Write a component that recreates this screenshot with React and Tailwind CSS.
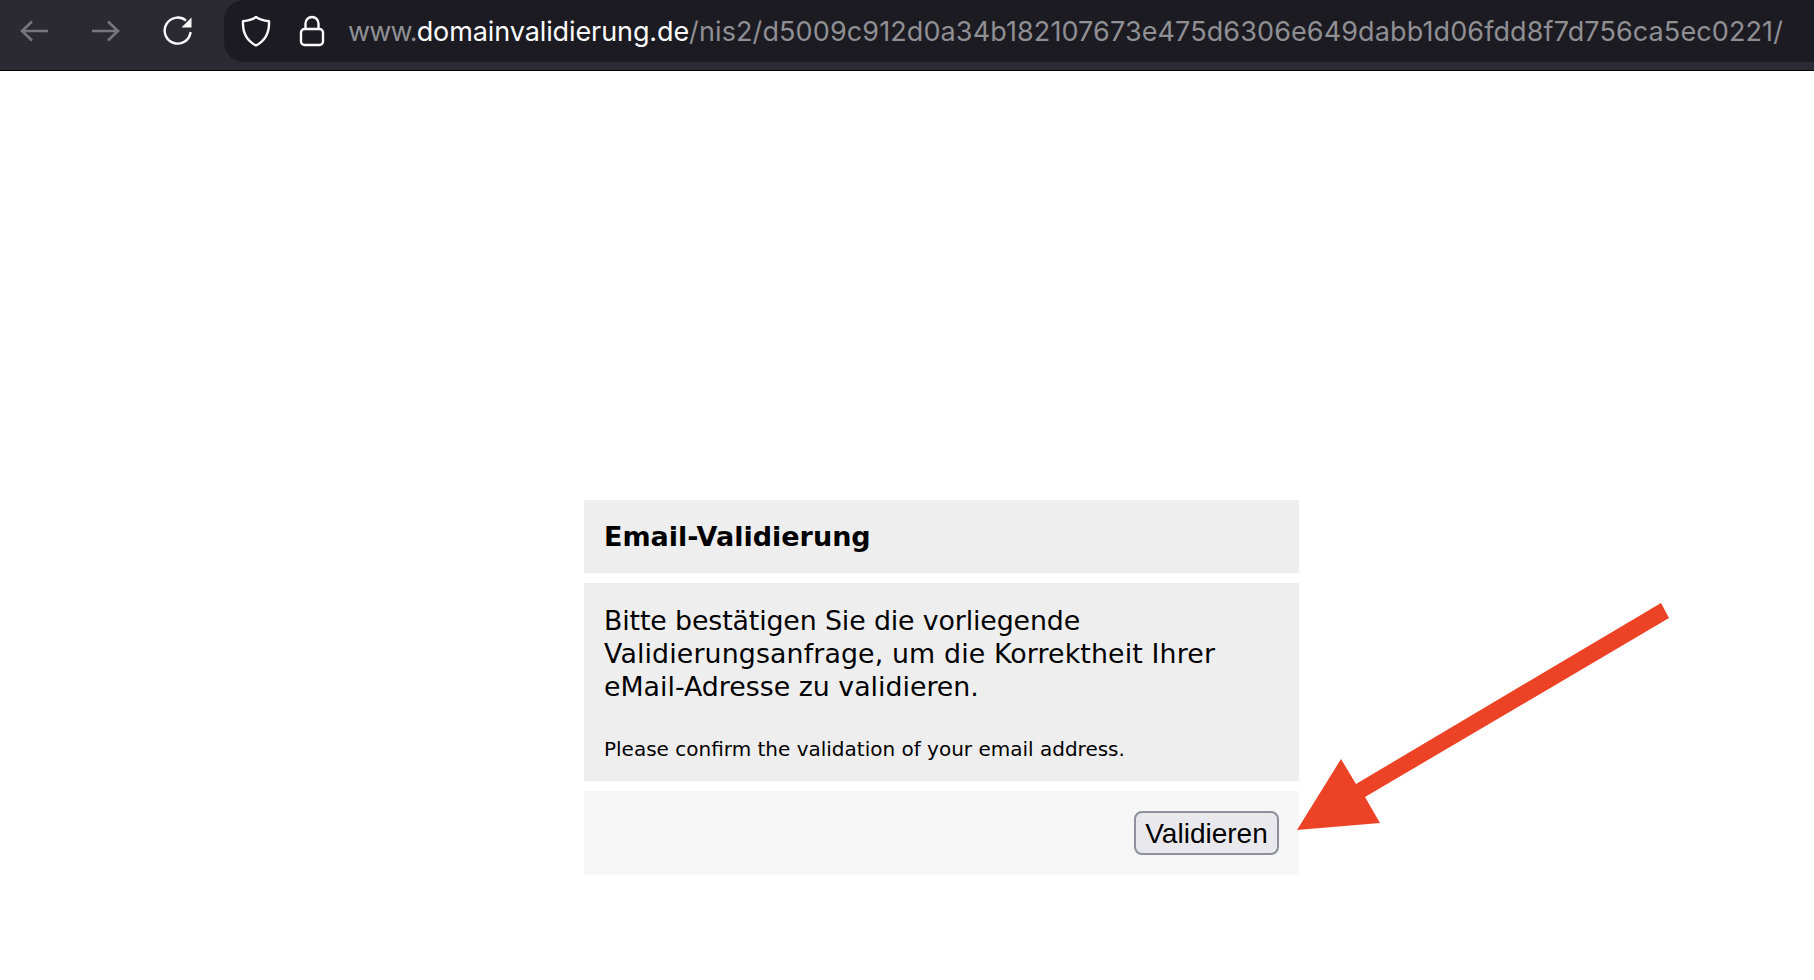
const NavBar = () => {
  return (
    <div className="h-[71px] bg-[#2b2a33] border-b border-black flex items-start">
      <div className="w-[224px] h-[62px] flex items-center shrink-0">
        <svg width="30" height="24" viewBox="0 0 30 24" className="ml-[19px]" fill="none" stroke="#77767c" strokeWidth="2.6">
          <path d="M29 12H3M13 2.500 3 12l10 9.500" />
        </svg>
        <svg width="30" height="24" viewBox="0 0 30 24" className="ml-[42px]" fill="none" stroke="#77767c" strokeWidth="2.6">
          <path d="M1 12h26M17 2.500 27 12l-10 9.500" />
        </svg>
        <svg width="32" height="32" viewBox="0 0 32 32" className="ml-[41px]" fill="none" stroke="#fbfbfe" strokeWidth="2.4">
          <path d="M28.600 17a13 13 0 1 1-4.600-11.400" />
          <path d="M29.500 2.500v10h-10z" fill="#fbfbfe" stroke="none" />
        </svg>
      </div>
      <div className="flex-1 h-[62px] bg-[#1c1b22] rounded-l-[20px] flex items-center min-w-0">
        <svg width="30" height="32" viewBox="0 0 30 32" className="ml-[17px] shrink-0" fill="none" stroke="#fbfbfe" strokeWidth="2.4" strokeLinejoin="round">
          <path d="M15 2c3 2.200 7.500 3.600 13 4.200C28.500 17 25 25.500 15 30.500 5 25.500 1.500 17 2 6.200 7.500 5.600 12 4.200 15 2z" />
        </svg>
        <svg width="26" height="32" viewBox="0 0 26 32" className="ml-[28px] shrink-0" fill="none" stroke="#fbfbfe" strokeWidth="2.4">
          <rect x="2" y="14" width="22" height="16" rx="3.500" />
          <path d="M6.500 14V8.500a6.500 6.500 0 0 1 13 0V14" />
        </svg>
        <div className="ml-[23px] text-[27px] leading-none whitespace-nowrap text-[#8f8f94] font-['Inter',sans-serif] tracking-[0.11px]">
          <span className="tracking-[-0.85px]">www.</span>
          <span className="text-[#fbfbfe] tracking-[-0.1px]">domainvalidierung.de</span>
          /nis2/d5009c912d0a34b182107673e475d6306e649dabb1d06fdd8f7d756ca5ec0221/
        </div>
      </div>
    </div>
  );
};

const ValidationCard = () => {
  return (
    <div className="w-[715px] ml-[584px] mt-[429px] text-black font-['DejaVu_Sans',sans-serif]">
      <div className="h-[73px] bg-[#eeeeee] pl-5 pt-[2px] flex items-center">
        <h1 className="text-[27px] font-bold">Email-Validierung</h1>
      </div>
      <div className="mt-[10px] h-[198px] bg-[#eeeeee] px-5 pt-[21px]">
        <p className="text-[26.8px] leading-[33px]">
          <span className="tracking-[-0.13px]">Bitte bestätigen Sie die vorliegende</span>
          <br />
          <span className="tracking-[0.13px]">Validierungsanfrage, um die Korrektheit Ihrer</span>
          <br />
          eMail-Adresse zu validieren.
        </p>
        <p className="text-[20px] leading-[28px] mt-[32px]">Please confirm the validation of your email address.</p>
      </div>
      <div className="mt-[10px] h-[84px] bg-[#f6f6f6] flex items-center justify-end pr-5">
        <button
          type="button"
          className="w-[145px] h-[44px] pt-[2px] bg-[#e9e9ed] border-2 border-[#8f8f9d] rounded-[8px] text-[28px] leading-none font-['Liberation_Sans',sans-serif]"
        >
          Validieren
        </button>
      </div>
    </div>
  );
};

const App = () => {
  return (
    <div className="relative h-[980px] bg-white overflow-hidden">
      <NavBar />
      <ValidationCard />
      <svg className="absolute left-0 top-0 pointer-events-none" width="1814" height="980" viewBox="0 0 1814 980">
        <path d="M1661 603 1669 618 1365 797 1380 823 1297 830 1341 759 1356 784z" fill="#ec4226" />
      </svg>
    </div>
  );
};

export default App;
